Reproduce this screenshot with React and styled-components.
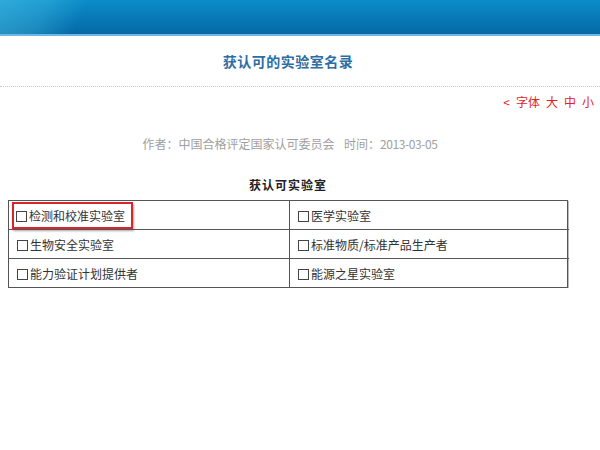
import React from 'react';
import styled, { createGlobalStyle } from "styled-components";

const GlobalStyle = createGlobalStyle`
  html, body {
    margin: 0;
    padding: 0;
    background: #fff;
    font-family: "Liberation Sans", "Noto Sans CJK SC", sans-serif;
    font-size: 12px;
  }
`;

const Banner = styled.div`
  height: 34px;
  background:
    linear-gradient(115deg, rgba(80, 200, 235, 0.5) 0px, rgba(80, 200, 235, 0.3) 45px, rgba(255,255,255,0) 80px),
    linear-gradient(#0b8dc9, #0569a6);
  border-bottom: 2px solid #6fb6e0;
`;

const Page = styled.div`
  width: 560px;
  margin-left: 8px;
`;

const TitleBlock = styled.div`
  height: 50px;
  display: flex;
  align-items: center;
  justify-content: center;
`;

const Title = styled.h1`
  margin: 0;
  font-family: "Noto Sans CJK SC", sans-serif;
  font-size: 14px;
  font-weight: bold;
  color: #2d6ea3;
  letter-spacing: 0.5px;
`;

const Divider = styled.div`
  border-top: 1px dotted #c8c8c8;
`;

const FontBar = styled.div`
  display: flex;
  justify-content: flex-end;
  gap: 6px;
  padding: 6px 6px 0 0;
  height: 17px;
  color: #e32222;
  font-family: "Noto Sans CJK SC", sans-serif;
  font-size: 12px;
`;

const FontLink = styled.span`
  cursor: pointer;
`;

const Meta = styled.div`
  margin-top: 25px;
  margin-left: 4px;
  text-align: center;
  color: #a0a0a0;
  font-family: "Noto Sans CJK SC", sans-serif;
  font-size: 12px;
  word-spacing: 2px;
`;

const Digits = styled.span`
  letter-spacing: -0.4px;
`;

const TableTitle = styled.div`
  margin-top: 24px;
  text-align: center;
  font-family: "Noto Sans CJK SC", sans-serif;
  font-weight: bold;
  font-size: 12px;
  color: #222;
  letter-spacing: 1px;
`;

const Grid = styled.div`
  margin-top: 7px;
  display: grid;
  grid-template-columns: 280px 280px;
  border: 1px solid #555;
  box-shadow: 1px 1px 0 #bbb;
`;

const Cell = styled.div`
  height: 28px;
  display: flex;
  align-items: center;
  padding-left: 4px;
  font-family: "Noto Sans CJK SC", sans-serif;
  font-size: 12px;
  color: #333;
  border-top: ${p => (p.$first ? "none" : "1px solid #555")};
  border-left: ${p => (p.$right ? "1px solid #555" : "none")};
`;

const Label = styled.span`
  display: inline-block;
  padding: 3px 6px 3px 2px;
  margin-left: ${p => (p.$marked ? "-1px" : "0")};
  border: 2px solid ${p => (p.$marked ? "#d9252a" : "transparent")};
  box-shadow: ${p => (p.$marked ? "1px 2px 2px rgba(0,0,0,0.35)" : "none")};
`;

const Box = styled.span`
  display: inline-block;
  width: 9px;
  height: 9px;
  border: 1px solid #444;
  margin-right: 2px;
  vertical-align: -1px;
`;

const labs = [
  ["检测和校准实验室", "医学实验室"],
  ["生物安全实验室", "标准物质/标准产品生产者"],
  ["能力验证计划提供者", "能源之星实验室"],
];

const App = () => {
  return (
    <>
      <GlobalStyle />
      <Banner />
      <Page>
        <TitleBlock>
          <Title>获认可的实验室名录</Title>
        </TitleBlock>
      </Page>
      <Divider />
      <FontBar>
        <FontLink>&lt;</FontLink>
        <FontLink>字体</FontLink>
        <FontLink>大</FontLink>
        <FontLink>中</FontLink>
        <FontLink>小</FontLink>
      </FontBar>
      <Page>
        <Meta>
          作者：中国合格评定国家认可委员会 &nbsp;时间：<Digits>2013-03-05</Digits>
        </Meta>
        <TableTitle>获认可实验室</TableTitle>
        <Grid>
          {labs.map((row, i) =>
            row.map((name, j) => (
              <Cell key={`${i}-${j}`} $first={i === 0} $right={j === 1}>
                <Label $marked={i === 0 && j === 0}>
                  <Box />
                  {name}
                </Label>
              </Cell>
            ))
          )}
        </Grid>
      </Page>
    </>
  );
};

export default App;
